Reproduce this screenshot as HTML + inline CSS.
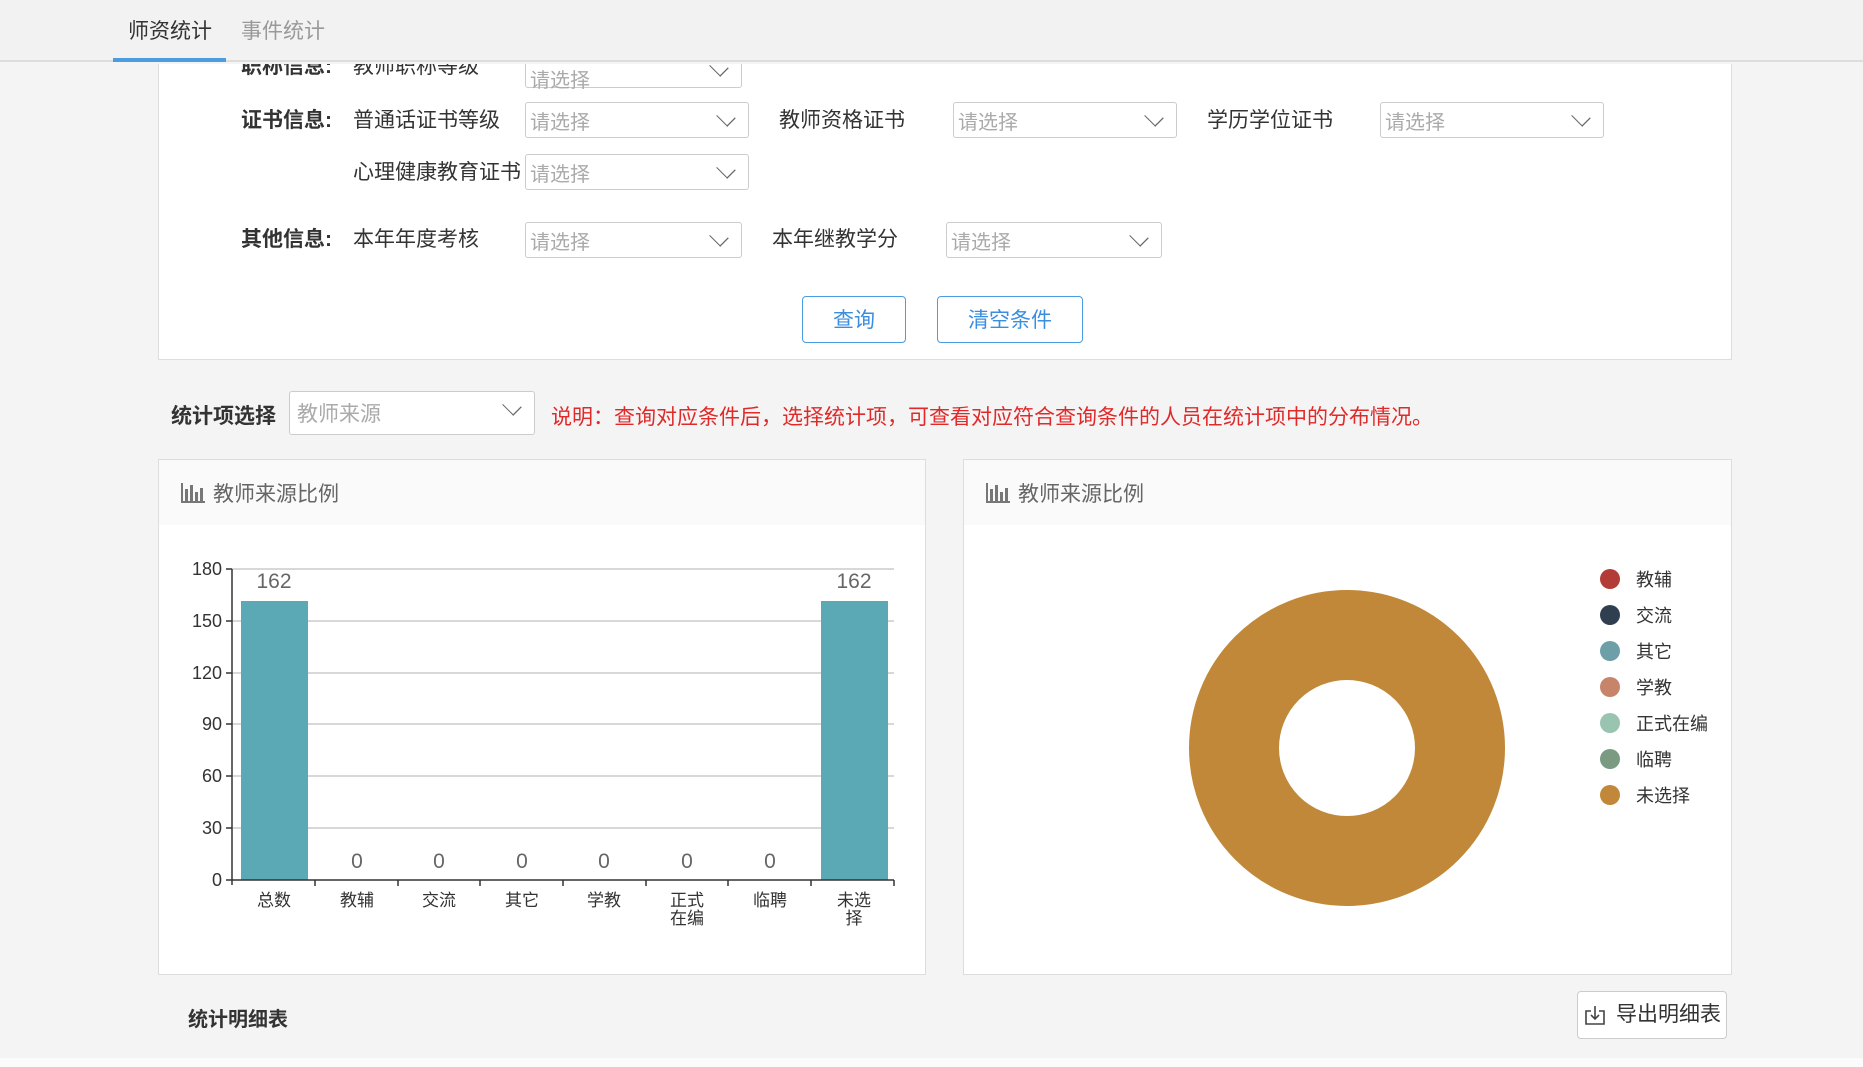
<!DOCTYPE html>
<html><head><meta charset="utf-8"><style>
*{margin:0;padding:0;box-sizing:border-box}
body{width:1863px;height:1067px;background:#f4f4f4;position:relative;overflow:hidden;font-family:"Liberation Sans","Noto Sans CJK SC",sans-serif;color:#333}
.a{position:absolute;white-space:nowrap}
.sel{position:absolute;height:36px;border:1px solid #ccc;border-radius:3px;background:#fff;color:#aaa;font-size:20px;line-height:34px;padding-left:4px;padding-top:3px}
.sel:after{content:"";position:absolute;right:16px;top:8px;width:11px;height:11px;border-right:1.5px solid #666;border-bottom:1.5px solid #666;transform:rotate(45deg) scaleX(1.3)}
.lb{font-size:21px;color:#333}
.bl{font-size:21px;font-weight:bold;color:#333}
.btn{position:absolute;border:1.5px solid #4a9de0;border-radius:4px;color:#3a8ee0;font-size:21px;text-align:center;background:#fff;padding-top:4px}
.panel{position:absolute;background:#fff;border:1px solid #ddd}
.ph{position:absolute;left:0;top:0;right:0;height:65px;background:#fafafa}
.pt{position:absolute;left:54px;top:18px;font-size:21px;color:#666}
</style></head><body>
<div class="a" style="left:0;top:0;width:1863px;height:62px;background:#f2f2f2;border-bottom:2px solid #ddd"></div>
<div class="a" style="left:128px;top:15px;font-size:21px;color:#333">师资统计</div>
<div class="a" style="left:241px;top:15px;font-size:21px;color:#999">事件统计</div>
<div class="a" style="left:113px;top:58px;width:113px;height:4px;background:#4a9de0"></div>

<div class="panel" style="left:158px;top:64px;width:1574px;height:296px;border-top:none">
</div>
<div style="position:absolute;left:0;top:64px;width:1863px;height:296px;overflow:hidden">
<div class="a bl" style="left:241px;top:-14px">职称信息:</div>
<div class="a lb" style="left:353px;top:-14px">教师职称等级</div>
<div class="sel" style="left:525px;top:-12px;width:217px;line-height:50px">请选择</div>
</div>

<div class="a bl" style="left:241px;top:104px">证书信息:</div>
<div class="a lb" style="left:353px;top:104px">普通话证书等级</div>
<div class="sel" style="left:525px;top:102px;width:224px">请选择</div>
<div class="a lb" style="left:779px;top:104px">教师资格证书</div>
<div class="sel" style="left:953px;top:102px;width:224px">请选择</div>
<div class="a lb" style="left:1207px;top:104px">学历学位证书</div>
<div class="sel" style="left:1380px;top:102px;width:224px">请选择</div>
<div class="a lb" style="left:353px;top:156px">心理健康教育证书</div>
<div class="sel" style="left:525px;top:154px;width:224px">请选择</div>

<div class="a bl" style="left:241px;top:223px">其他信息:</div>
<div class="a lb" style="left:353px;top:223px">本年年度考核</div>
<div class="sel" style="left:525px;top:222px;width:217px">请选择</div>
<div class="a lb" style="left:772px;top:223px">本年继教学分</div>
<div class="sel" style="left:946px;top:222px;width:216px">请选择</div>

<div class="btn" style="left:802px;top:296px;width:104px;height:47px;line-height:40px">查询</div>
<div class="btn" style="left:937px;top:296px;width:146px;height:47px;line-height:40px">清空条件</div>

<div class="a bl" style="left:171px;top:400px">统计项选择</div>
<div class="sel" style="left:289px;top:391px;width:246px;height:44px;line-height:40px;font-size:21px;padding-left:7px">教师来源</div>
<div class="a" style="left:551px;top:401px;font-size:21px;color:#e02a2a">说明：查询对应条件后，选择统计项，可查看对应符合查询条件的人员在统计项中的分布情况。</div>

<div class="panel" style="left:158px;top:459px;width:768px;height:516px">
<div class="ph"></div>
<svg class="a" style="left:22px;top:23px" width="24" height="20"><g fill="#777"><rect x="0" y="0" width="2" height="20"/><rect x="0" y="18" width="24" height="2"/><rect x="4" y="6" width="3" height="12"/><rect x="9" y="2" width="3" height="16"/><rect x="14" y="9" width="3" height="9"/><rect x="19" y="5" width="3" height="13"/></g></svg>
<div class="pt">教师来源比例</div>
</div>
<svg class="a" style="left:158px;top:459px" width="768" height="516" font-family="Liberation Sans,Noto Sans CJK SC,sans-serif">
<g stroke="#ccc" stroke-width="1.5">
<line x1="74" x2="736" y1="110" y2="110"/><line x1="74" x2="736" y1="162" y2="162"/><line x1="74" x2="736" y1="214" y2="214"/><line x1="74" x2="736" y1="265" y2="265"/><line x1="74" x2="736" y1="317" y2="317"/><line x1="74" x2="736" y1="369" y2="369"/></g>
<rect x="83" y="142" width="67" height="279" fill="#5aa9b5"/>
<rect x="663" y="142" width="67" height="279" fill="#5aa9b5"/>
<g stroke="#333" stroke-width="1.5"><line x1="74" y1="110" x2="74" y2="426"/><line x1="68" y1="421" x2="736" y2="421"/>
<line x1="68" y1="110" x2="74" y2="110"/><line x1="68" y1="162" x2="74" y2="162"/><line x1="68" y1="214" x2="74" y2="214"/><line x1="68" y1="265" x2="74" y2="265"/><line x1="68" y1="317" x2="74" y2="317"/><line x1="68" y1="369" x2="74" y2="369"/>
<line x1="157" y1="421" x2="157" y2="427"/><line x1="240" y1="421" x2="240" y2="427"/><line x1="322" y1="421" x2="322" y2="427"/><line x1="405" y1="421" x2="405" y2="427"/><line x1="488" y1="421" x2="488" y2="427"/><line x1="570" y1="421" x2="570" y2="427"/><line x1="653" y1="421" x2="653" y2="427"/><line x1="736" y1="421" x2="736" y2="427"/></g>
<g font-size="18" fill="#333" text-anchor="end"><text x="64" y="116">180</text><text x="64" y="168">150</text><text x="64" y="220">120</text><text x="64" y="271">90</text><text x="64" y="323">60</text><text x="64" y="375">30</text><text x="64" y="427">0</text></g>
<g font-size="21" fill="#666" text-anchor="middle"><text x="116" y="129">162</text><text x="696" y="129">162</text>
<text x="199" y="409">0</text><text x="281" y="409">0</text><text x="364" y="409">0</text><text x="446" y="409">0</text><text x="529" y="409">0</text><text x="612" y="409">0</text></g>
<g font-size="17" fill="#333" text-anchor="middle"><text x="116" y="447">总数</text><text x="199" y="447">教辅</text><text x="281" y="447">交流</text><text x="364" y="447">其它</text><text x="446" y="447">学教</text><text x="529" y="447">正式</text><text x="529" y="465">在编</text><text x="612" y="447">临聘</text><text x="696" y="447">未选</text><text x="696" y="465">择</text></g>
</svg>

<div class="panel" style="left:963px;top:459px;width:769px;height:516px">
<div class="ph"></div>
<svg class="a" style="left:22px;top:23px" width="24" height="20"><g fill="#777"><rect x="0" y="0" width="2" height="20"/><rect x="0" y="18" width="24" height="2"/><rect x="4" y="6" width="3" height="12"/><rect x="9" y="2" width="3" height="16"/><rect x="14" y="9" width="3" height="9"/><rect x="19" y="5" width="3" height="13"/></g></svg>
<div class="pt">教师来源比例</div>
</div>
<svg class="a" style="left:963px;top:459px" width="769" height="516" font-family="Liberation Sans,Noto Sans CJK SC,sans-serif">
<circle cx="384" cy="289" r="113" fill="none" stroke="#c08838" stroke-width="90"/>
<g font-size="18" fill="#333">
<circle cx="647" cy="120" r="10" fill="#b33c36"/><text x="673" y="127">教辅</text>
<circle cx="647" cy="156" r="10" fill="#2f3f50"/><text x="673" y="163">交流</text>
<circle cx="647" cy="192" r="10" fill="#6c9fa8"/><text x="673" y="199">其它</text>
<circle cx="647" cy="228" r="10" fill="#c8846a"/><text x="673" y="235">学教</text>
<circle cx="647" cy="264" r="10" fill="#98c4b0"/><text x="673" y="271">正式在编</text>
<circle cx="647" cy="300" r="10" fill="#7a9a82"/><text x="673" y="307">临聘</text>
<circle cx="647" cy="336" r="10" fill="#c08838"/><text x="673" y="343">未选择</text>
</g></svg>

<div class="a bl" style="left:188px;top:1003px;font-size:20px">统计明细表</div>
<div class="a" style="left:1577px;top:991px;width:150px;height:48px;border:1px solid #ccc;border-radius:4px;background:#fff;font-size:21px;line-height:46px;padding-left:38px;color:#333">导出明细表</div>
<svg class="a" style="left:1584px;top:1004px" width="22" height="22"><path d="M7 7H2V20H20V7H15M11 2V15M7 11L11 15L15 11" fill="none" stroke="#444" stroke-width="1.6"/></svg>
<div class="a" style="left:0;top:1058px;width:1863px;height:9px;background:#fbfbfb"></div>
</body></html>
